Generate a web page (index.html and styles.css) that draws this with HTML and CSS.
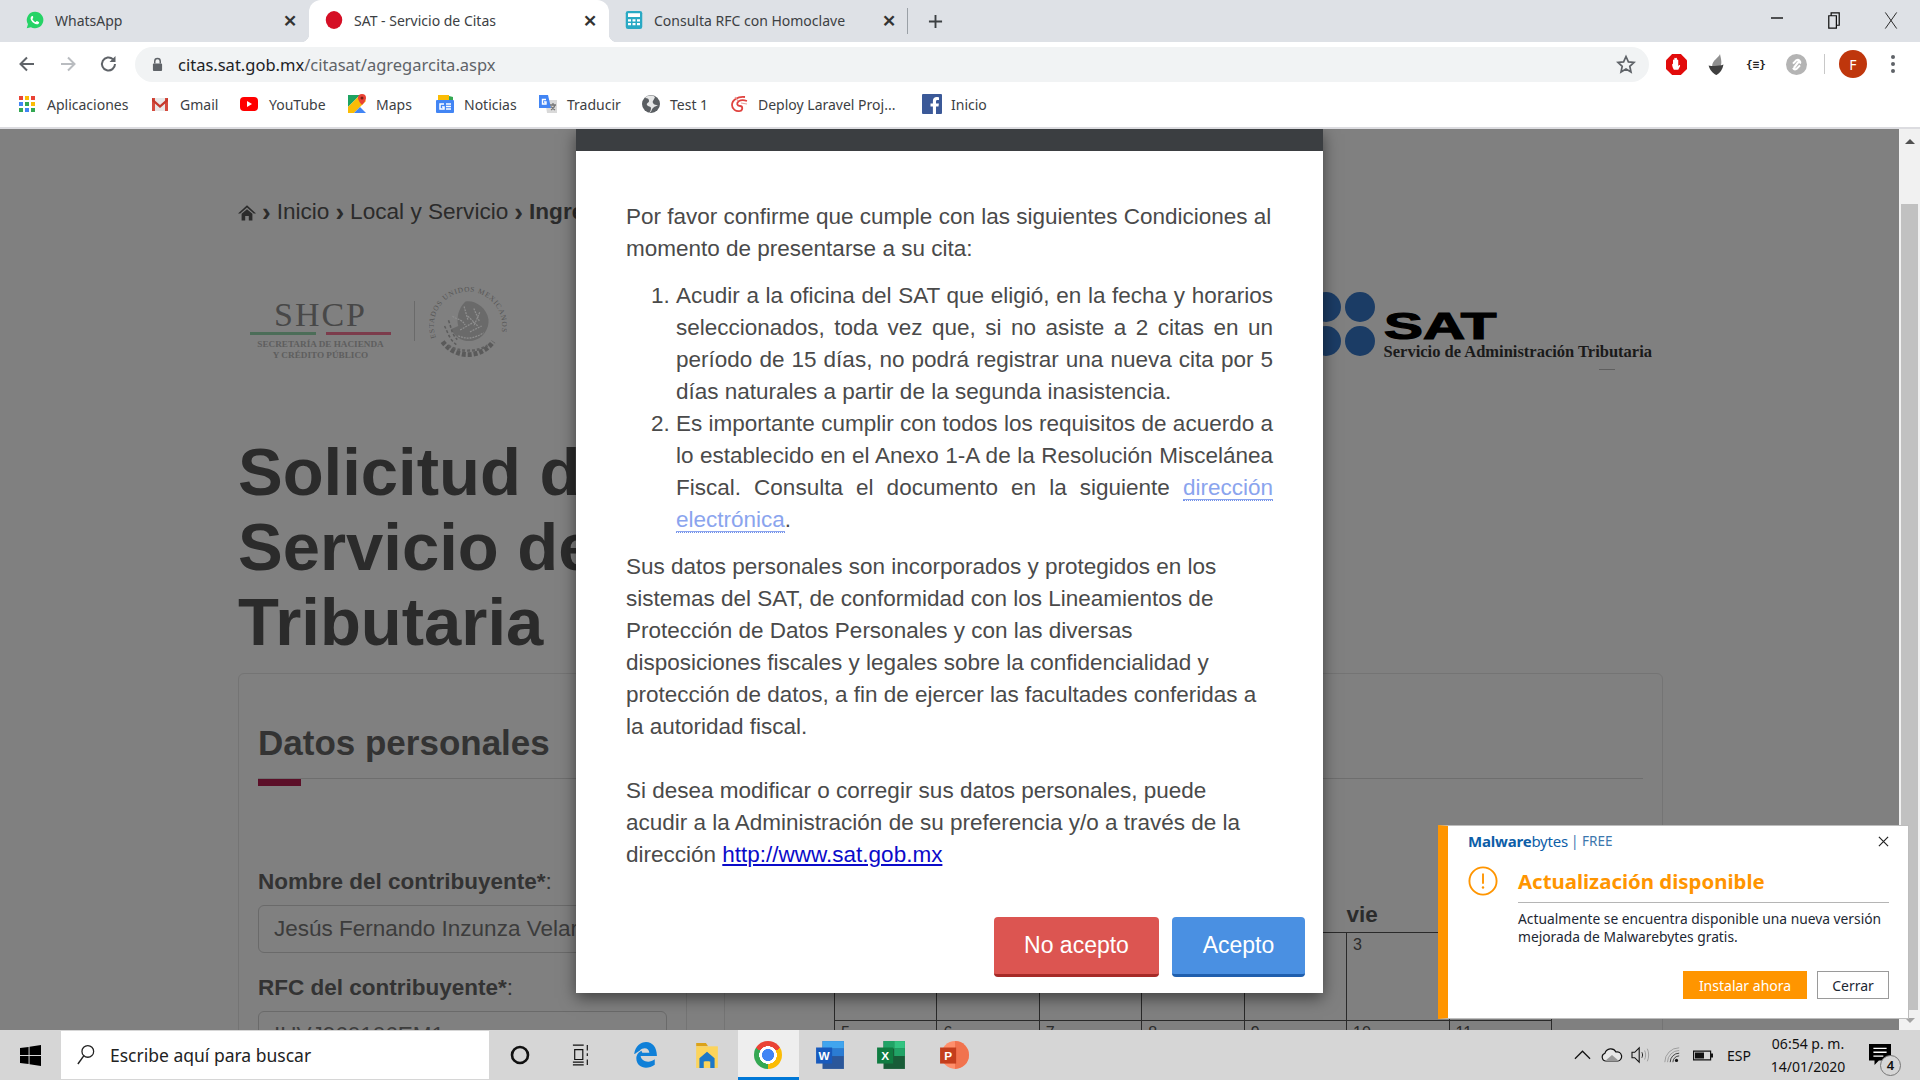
FILE: index.html
```html
<!DOCTYPE html>
<html lang="es">
<head>
<meta charset="utf-8">
<title>SAT - Servicio de Citas</title>
<link rel="stylesheet" href="styles.css">
</head>
<body>
<div class="screen">
  <div class="tabstrip">
    <div class="tab">
      <svg class="fav" viewBox="0 0 24 24"><path fill="#25d366" d="M12 1a11 11 0 0 0-9.400 16.600L1 23l5.600-1.500A11 11 0 1 0 12 1z"/><path fill="#fff" d="M8.400 6.500c-.4 0-1 .2-1.400.8-.5.7-1 1.500-.8 3 .3 2 2 4.300 4 5.800 1.800 1.300 3.600 1.900 5 1.600 1.200-.3 2-1.300 2.200-2.200.1-.5 0-.8-.3-1l-2.400-1.200c-.3-.1-.6-.1-.8.200l-.9 1.100c-.2.200-.4.200-.7.100-1.700-.7-3-2-3.800-3.600-.1-.3 0-.5.200-.7l.7-.9c.2-.2.200-.5.100-.8L9.400 7c-.2-.4-.6-.5-1-.5z"/></svg>
      <span class="tab-title">WhatsApp</span><span class="tab-x">×</span>
    </div>
    <div class="tab tab-active">
      <svg class="fav" viewBox="0 0 24 24"><ellipse cx="12" cy="12" rx="11" ry="12" fill="#d50f25"/></svg>
      <span class="tab-title">SAT - Servicio de Citas</span><span class="tab-x">×</span>
    </div>
    <div class="tab">
      <svg class="fav" viewBox="0 0 24 24"><rect x="1" y="0" width="22" height="24" rx="3" fill="#29a9c4"/><rect x="4" y="3" width="16" height="5" fill="#fff"/><path fill="#fff" d="M4 11h4v3H4zM10 11h4v3h-4zM16 11h4v3h-4zM4 16h4v3H4zM10 16h4v3h-4zM16 16h4v3h-4z"/></svg>
      <span class="tab-title">Consulta RFC con Homoclave</span><span class="tab-x">×</span>
    </div>
    <span class="tab-sep"></span>
    <span class="tab-plus">
      <svg viewBox="0 0 16 16" class="plus-ic"><path d="M8 1v14M1 8h14" stroke="#3c4043" stroke-width="2" fill="none"/></svg>
    </span>
    <div class="winctl">
      <svg viewBox="0 0 14 14" class="winbtn winbtn-m"><path d="M1 7h12" stroke="#111" stroke-width="1.400"/></svg>
      <svg viewBox="0 0 14 20" class="winbtn winbtn-r"><path d="M1.500 5h8v13h-8zM4 5V2h8.500v13H9.500" stroke="#111" stroke-width="1.300" fill="none"/></svg>
      <svg viewBox="0 0 14 20" class="winbtn winbtn-x"><path d="M1 1.500l12 17M13 1.500l-12 17" stroke="#222" stroke-width="1"/></svg>
    </div>
  </div>

  <div class="toolbar">
    <span class="navbtn"><svg viewBox="0 0 20 20"><path d="M17 10H4M10 3.500L3.500 10l6.500 6.500" fill="none" stroke="#5f6368" stroke-width="2"/></svg></span>
    <span class="navbtn"><svg viewBox="0 0 20 20"><path d="M3 10h13M10 3.500l6.500 6.500-6.500 6.500" fill="none" stroke="#b9bcc0" stroke-width="2"/></svg></span>
    <span class="navbtn"><svg viewBox="0 0 20 20"><path d="M16 10a6.500 6.500 0 1 1-2-4.700" fill="none" stroke="#5f6368" stroke-width="2"/><path d="M16.500 2v6h-6z" fill="#5f6368"/></svg></span>
    <div class="omnibox">
      <svg class="lock" viewBox="0 0 12 16"><path d="M3 7V4.500a3 3 0 0 1 6 0V7" fill="none" stroke="#5f6368" stroke-width="1.600"/><rect x="1" y="7" width="10" height="8" rx="1" fill="#5f6368"/></svg>
      <span class="url"><span class="url-host">citas.sat.gob.mx</span>/citasat/agregarcita.aspx</span>
      <svg class="star" viewBox="0 0 20 20"><path d="M10 2l2.400 5.400 5.600.6-4.200 3.800 1.200 5.700L10 14.600l-5 2.900 1.200-5.700L2 8l5.600-.6z" fill="none" stroke="#5f6368" stroke-width="1.700"/></svg>
    </div>
    <span class="extbtn"><svg viewBox="0 0 24 24" class="ext"><path d="M7 0h10l7 7v10l-7 7H7l-7-7V7z" fill="#e20b0b"/><path d="M9 18c-1-2-2-4-2-6 0-1 1-1 1 0V7c0-1 1.500-1 1.500 0V5c0-1 1.500-1 1.500 0v0c0-1 1.500-1 1.500 0v2c0-1 1.500-1 1.500 0v7c1-2 2.500-2 2 0l-2 4z" fill="#fff"/></svg></span>
    <span class="extbtn"><svg viewBox="0 0 24 24" class="ext"><path d="M16 0c-1 4-9 7-9 14 0 2 1 3 2 4l7-3c3-4 1-10 0-15z" fill="#8f8f8f"/><path d="M3 13c4 1 12 1 17-1-1 6-4 10-8 12-4-2-8-6-9-11z" fill="#3f3f3f"/></svg></span>
    <span class="extbtn ext-json">{≡}</span>
    <span class="extbtn"><svg viewBox="0 0 24 24" class="ext"><circle cx="12" cy="12" r="12" fill="#b4b4b4"/><path d="M9 16l6-8M8 11l4-4a3 3 0 0 1 4 4" stroke="#fff" stroke-width="2.400" fill="none"/><path d="M16 13l-4 4a3 3 0 0 1-4-1" stroke="#fff" stroke-width="2.400" fill="none"/></svg></span>
    <span class="tool-sep"></span>
    <span class="avatar">F</span>
    <span class="dots"><i></i><i></i><i></i></span>
  </div>

  <div class="bookmarks">
    <div class="bm"><svg class="bm-ic" viewBox="0 0 18 18"><path fill="#ea4335" d="M1 1h4v4H1z"/><path fill="#fbbc05" d="M7 1h4v4H7z"/><path fill="#ea4335" d="M13 1h4v4h-4z"/><path fill="#4285f4" d="M1 7h4v4H1z"/><path fill="#34a853" d="M7 7h4v4H7z"/><path fill="#fbbc05" d="M13 7h4v4h-4z"/><path fill="#34a853" d="M1 13h4v4H1z"/><path fill="#4285f4" d="M7 13h4v4H7z"/><path fill="#34a853" d="M13 13h4v4h-4z"/></svg>Aplicaciones</div>
    <div class="bm"><svg class="bm-ic" viewBox="0 0 18 18"><path fill="#e8e8e8" d="M1 3h16v13H1z"/><path fill="#d54c3f" d="M1 3h3v13H1zM14 3h3v13h-3z"/><path fill="#c5392c" d="M1 3l8 7 8-7v3l-8 7-8-7z"/></svg>Gmail</div>
    <div class="bm"><svg class="bm-ic" viewBox="0 0 18 18"><rect y="2" width="18" height="14" rx="4" fill="#f00"/><path d="M7 6l5 3-5 3z" fill="#fff"/></svg>YouTube</div>
    <div class="bm bm-l"><svg class="bm-ic" viewBox="0 0 20 20"><path fill="#1ea362" d="M1 1h12L1 13z"/><path fill="#fbbc05" d="M1 13L13 1l6 6L7 19H1z"/><path fill="#4285f4" d="M7 19l6-6 6 6z"/><path fill="#ea4335" d="M15 0a4 4 0 0 1 4 4c0 3-4 7-4 7s-4-4-4-7a4 4 0 0 1 4-4z"/><circle cx="15" cy="4" r="1.500" fill="#7b1d14"/></svg>Maps</div>
    <div class="bm bm-l"><svg class="bm-ic" viewBox="0 0 20 20"><path fill="#fbbc05" d="M3 1h11v6H3z"/><path fill="#34a853" d="M14 2l4 1v5h-4z"/><rect x="1" y="6" width="18" height="13" rx="1" fill="#4285f4"/><path stroke="#fff" stroke-width="1.500" fill="none" d="M9 10H5v5h4v-2H7M11 10h5M11 12.500h5M11 15h5"/></svg>Noticias</div>
    <div class="bm bm-l"><svg class="bm-ic" viewBox="0 0 20 20"><path fill="#d9d9d9" d="M7 6h12v13H9z"/><path fill="#4285f4" d="M1 1h9l3 13H1z"/><path stroke="#fff" stroke-width="1.400" fill="none" d="M8 5.500H4.500v4.500H8V8H6"/><path stroke="#777" stroke-width="1.300" fill="none" d="M12 11h6M15 9v2M17 11c-.5 2-2 4-4 5M13 12.500c1 1.500 2 2.500 4 3.500"/></svg>Traducir</div>
    <div class="bm bm-l"><svg class="bm-ic" viewBox="0 0 20 20"><circle cx="10" cy="10" r="9" fill="#5a5e62"/><path fill="#fff" d="M4 4c3 0 4 1 4 3S5 9 6 11s4 1 4 3-1 4-2 5c3-1 2-3 4-5s4-2 5-3c-2 0-4 0-5-2s1-3 2-6c-3-2-7-2-10 1z" opacity=".85"/></svg>Test 1</div>
    <div class="bm bm-l"><svg class="bm-ic" viewBox="0 0 20 20"><path fill="none" stroke="#e0433f" stroke-width="1.800" d="M16 3C9 2 3 6 3 11c0 4 4 7 8 6 3-1 3-5 0-5-3 0-4-3-1-5 2-1 5-1 8 0"/><path fill="none" stroke="#e9a09d" stroke-width="1.200" d="M6 3l3 4M12 9l6 1"/></svg>Deploy Laravel Proj...</div>
    <div class="bm bm-l"><svg class="bm-ic" viewBox="0 0 20 20"><rect x="0" y="0" width="20" height="20" rx="1" fill="#3b5998"/><path fill="#fff" d="M14 20v-7.500h2.500l.4-3H14V7.600c0-.9.300-1.500 1.500-1.500H17V3.300C16.700 3.300 15.800 3 14.700 3c-2.300 0-3.800 1.400-3.800 3.900v2.600H8.500v3h2.400V20z"/></svg>Inicio</div>
  </div>

  <main class="viewport">
    <div class="page">
      <nav class="crumbs">
        <svg class="home" viewBox="0 0 20 18"><path d="M10 1L0 10h2.500L10 3.500 17.500 10H20z" fill="#2b2b2b"/><path d="M4 10.500L10 5.500l6 5V18h-4v-5H8v5H4z" fill="#2b2b2b"/></svg>
        <b class="sep">›</b><span>Inicio</span><b class="sep">›</b><span>Local y Servicio</span><b class="sep">›</b><b>Ingreso al sistema</b>
      </nav>
      <div class="logos">
        <div class="shcp">
          <div class="shcp-text">
            <div class="shcp-name">SHCP</div>
            <div class="shcp-bars"><i class="bar-g"></i><i class="bar-r"></i></div>
            <div class="shcp-sub">SECRETARÍA DE HACIENDA</div>
            <div class="shcp-sub">Y CRÉDITO PÚBLICO</div>
          </div>
          <span class="shcp-div"></span>
          <svg class="seal" viewBox="0 0 80 80">
            <defs><path id="sealp" d="M9 56a35 35 0 1 1 62 0"/></defs>
            <text class="seal-text"><textPath href="#sealp" startOffset="3%">ESTADOS UNIDOS MEXICANOS</textPath></text>
            <path d="M14 56a32 32 0 0 0 52 0" fill="none" stroke="#5a5a5a" stroke-width="5" stroke-dasharray="4 2"/>
            <path d="M37 15c10-2 22 6 24 18 1 10-6 20-16 22-9 2-19-3-22-12l7-3c-2-8 0-18 7-25z" fill="#6a6a6a"/>
            <path d="M24 30c6 4 10 3 13 9M46 22l6 14M30 50c8 4 16 3 26-3M40 30l10 10M36 20l4 14M52 26l-6 14M32 44l14-8M42 46l12-6" stroke="#8e8e8e" stroke-width="1.300" fill="none" stroke-dasharray="2 1"/>
            <path d="M20 34c3 8 3 14 9 20M16 40c3 6 5 14 12 19" stroke="#5c5c5c" stroke-width="1.600" stroke-dasharray="3 2" fill="none"/>
            <path d="M20 60c10 7 30 7 40 0" stroke="#606060" stroke-width="2.500" stroke-dasharray="3 2" fill="none"/>
          </svg>
        </div>
        <div class="sat">
          <div class="sat-dots"><i></i><i></i><i></i><i></i></div>
          <div class="sat-text">
            <div class="sat-mark"><span>SAT</span></div>
            <div class="sat-name">Servicio de Administración Tributaria</div>
            <div class="sat-tiny"></div>
          </div>
        </div>
      </div>
      <h1 class="title">Solicitud de Cita de<br>Servicio de Administración<br>Tributaria</h1>
      <section class="panel">
        <h2 class="panel-title">Datos personales</h2>
        <div class="panel-body">
          <div class="form-col">
            <label class="lbl"><b>Nombre del contribuyente*</b>:</label>
            <div class="input">Jesús Fernando Inzunza Velarde</div>
            <label class="lbl"><b>RFC del contribuyente*</b>:</label>
            <div class="input">IUVJ960106EM1</div>
          </div>
          <div class="cal-col">
            <table class="cal">
              <thead><tr><th>dom</th><th>lun</th><th>mar</th><th>mié</th><th>jue</th><th>vie</th><th>sáb</th></tr></thead>
              <tbody>
                <tr><td></td><td></td><td></td><td>1</td><td>2</td><td>3</td><td>4</td></tr>
                <tr><td>5</td><td>6</td><td>7</td><td>8</td><td>9</td><td>10</td><td>11</td></tr>
              </tbody>
            </table>
          </div>
        </div>
      </section>
    </div>

    <div class="scrollbar">
      <span class="sb-arrow sb-up"></span>
      <span class="sb-thumb"></span>
      <span class="sb-arrow sb-down"></span>
    </div>

    <div class="modal">
      <div class="modal-strip"></div>
      <div class="modal-body">
        <p>Por favor confirme que cumple con las siguientes Condiciones al momento de presentarse a su cita:</p>
        <ol>
          <li>Acudir a la oficina del SAT que eligió, en la fecha y horarios seleccionados, toda vez que, si no asiste a 2 citas en un período de 15 días, no podrá registrar una nueva cita por 5 días naturales a partir de la segunda inasistencia.</li>
          <li>Es importante cumplir con todos los requisitos de acuerdo a lo establecido en el Anexo 1-A de la Resolución Miscelánea Fiscal. Consulta el documento en la siguiente <a class="link-soft" href="#">dirección electrónica</a>.</li>
        </ol>
        <p class="p-narrow">Sus datos personales son incorporados y protegidos en los sistemas del SAT, de conformidad con los Lineamientos de Protección de Datos Personales y con las diversas disposiciones fiscales y legales sobre la confidencialidad y protección de datos, a fin de ejercer las facultades conferidas a la autoridad fiscal.</p>
        <p class="p-narrow p-gap">Si desea modificar o corregir sus datos personales, puede acudir a la Administración de su preferencia y/o a través de la dirección <a class="link-hard" href="#">http://www.sat.gob.mx</a></p>
      </div>
      <div class="modal-foot">
        <button class="btn btn-no">No acepto</button>
        <button class="btn btn-yes">Acepto</button>
      </div>
    </div>

    <aside class="toast">
      <div class="toast-head">
        <span class="mb-logo"><b>Malware</b>bytes</span><span class="mb-free">| FREE</span>
        <svg class="toast-x" viewBox="0 0 12 12"><path d="M1 1l10 10M11 1L1 11" stroke="#222" stroke-width="1.300"/></svg>
      </div>
      <div class="toast-main">
        <svg class="toast-ic" viewBox="0 0 32 32"><circle cx="16" cy="16" r="14.500" fill="none" stroke="#ff9500" stroke-width="2"/><path d="M16 8v11" stroke="#ff9500" stroke-width="2"/><circle cx="16" cy="23" r="1.300" fill="#ff9500"/></svg>
        <div class="toast-col">
          <div class="toast-title">Actualización disponible</div>
          <div class="toast-msg">Actualmente se encuentra disponible una nueva versión mejorada de Malwarebytes gratis.</div>
          <div class="toast-btns">
            <span class="tbtn tbtn-main">Instalar ahora</span>
            <span class="tbtn tbtn-alt">Cerrar</span>
          </div>
        </div>
      </div>
    </aside>
  </main>

  <footer class="taskbar">
    <span class="tb-start"><svg viewBox="0 0 22 22" class="win"><path d="M0 3.200L9 2v8.500H0zM10 1.900L22 0v10.500H10zM0 11.500h9V20l-9-1.200zM10 11.500h12V22l-12-1.900z" fill="#000"/></svg></span>
    <div class="tb-search">
      <svg viewBox="0 0 20 24" class="tb-lens"><circle cx="12" cy="8" r="6.500" fill="none" stroke="#222" stroke-width="1.400"/><path d="M7.500 13L1 22" stroke="#222" stroke-width="1.600"/></svg>
      <span>Escribe aquí para buscar</span>
    </div>
    <span class="tb-cell"><svg viewBox="0 0 20 20" class="tb-ic-s"><circle cx="10" cy="10" r="8" fill="none" stroke="#111" stroke-width="2.600"/></svg></span>
    <span class="tb-cell"><svg viewBox="0 0 20 24" class="tb-ic-t"><path d="M1 1h12M1 23h12M3 6h9v11H3zM1 20h12M17 1v6M17 10v3M17 17v6" stroke="#111" stroke-width="1.300" fill="none"/></svg></span>
    <span class="tb-gap"></span>
    <span class="tb-app"><svg viewBox="0 0 24 24" class="tb-ic"><path fill="#1080d8" d="M2 11C3 4 8 0 13 0c6 0 10 5 10 13H8c.3 5 8 7 13 3v5c-7 5-17 3-17-6 0-3 2-6 5-7 0 2 0 2 7 2 0-4-5-6-9-2-2 1-4 3-5 3z"/></svg></span>
    <span class="tb-app"><svg viewBox="0 0 24 24" class="tb-ic"><path fill="#dba21a" d="M2 1h9l2 3H2z"/><path fill="#fcd45b" d="M2 4h20v20H2z"/><path fill="#1d78c9" d="M12 9l7 6v9h-4v-6H9v6H5v-9z"/><path fill="#fcd45b" d="M10 18h4v6h-4z"/></svg></span>
    <span class="tb-app tb-active"><span class="chrome"></span></span>
    <span class="tb-app"><svg viewBox="0 0 28 28" class="tb-ic tb-ic-o"><path fill="#2b579a" d="M7 1h20v26H7z"/><path fill="#41a5ee" d="M7 1h20v7H7z"/><path fill="#2b7cd3" d="M7 8h20v7H7z"/><path fill="#185abd" d="M1 7h15v15H1z"/><text x="8.500" y="19" class="ofc">W</text></svg></span>
    <span class="tb-app"><svg viewBox="0 0 28 28" class="tb-ic tb-ic-o"><path fill="#185c37" d="M7 1h20v26H7z"/><path fill="#33c481" d="M17 1h10v7H17z"/><path fill="#21a366" d="M7 1h10v7H7zM17 8h10v7H17z"/><path fill="#107c41" d="M1 7h15v15H1z"/><text x="8.500" y="19" class="ofc">X</text></svg></span>
    <span class="tb-app tb-app-p"><svg viewBox="0 0 28 28" class="tb-ic tb-ic-o"><circle cx="15" cy="14" r="13" fill="#ff8f6b"/><path fill="#ed6c47" d="M15 1a13 13 0 0 1 0 26z" opacity=".8"/><path fill="#c43e1c" d="M1 7h15v15H1z"/><text x="8.500" y="19" class="ofc">P</text></svg></span>
    <div class="tray">
      <span class="tr"><svg viewBox="0 0 18 10" class="tr-ic"><path d="M1 9l8-8 8 8" fill="none" stroke="#111" stroke-width="1.300"/></svg></span>
      <span class="tr"><svg viewBox="0 0 22 14" class="tr-cloud"><path d="M5 13a4 4 0 0 1-1-7.800A6 6 0 0 1 15 4a4.500 4.500 0 0 1 2 9z" fill="#e8e8e8" stroke="#111" stroke-width="1.200"/><path d="M4 13l7-6 7 6z" fill="#9a9a9a"/></svg></span>
      <span class="tr"><svg viewBox="0 0 22 20" class="tr-spk"><path d="M1 7h3l5-5v16l-5-5H1z" fill="none" stroke="#111" stroke-width="1.200"/><path d="M12 7c1 2 1 4 0 6" fill="none" stroke="#111"/><path d="M15 5c1.500 3 1.500 7 0 10M18 3c2 4 2 10 0 14" fill="none" stroke="#999"/></svg></span>
      <span class="tr"><svg viewBox="0 0 20 20" class="tr-spk"><path d="M2 18A16 16 0 0 1 18 2M5 18A13 13 0 0 1 18 5" fill="none" stroke="#999"/><path d="M8 18a10 10 0 0 1 10-10M11 18a7 7 0 0 1 7-7" fill="none" stroke="#333"/><circle cx="15" cy="16" r="1.800" fill="#111"/></svg></span>
      <span class="tr"><svg viewBox="0 0 20 10" class="tr-bat"><path d="M.6.6h17v8.800H.6z" fill="none" stroke="#111" stroke-width="1.200"/><path d="M2 2h9v6H2zM18 3h2v4h-2z" fill="#111"/></svg></span>
      <span class="tr tr-lang">ESP</span>
      <span class="tr tr-clock"><span>06:54 p. m.</span><span>14/01/2020</span></span>
      <span class="tr tr-notif">
        <svg viewBox="0 0 20 20" class="nt"><path d="M0 0h20v15H9l-4 4v-4H0z" fill="#000"/><path d="M4 4h12M4 7.500h12M4 11h9" stroke="#fff" stroke-width="1.200"/></svg>
        <span class="badge">4</span>
      </span>
    </div>
  </footer>
</div>
</body>
</html>
```
FILE: styles.css
```css
* { box-sizing: border-box; }
html, body { margin: 0; padding: 0; height: 100%; overflow: hidden; }
body { font-family: "Liberation Sans", Arial, sans-serif; color: #333; }
.screen { width: 1920px; height: 1080px; display: flex; flex-direction: column; overflow: hidden; }

/* tab strip */
.tabstrip { height: 42px; flex: none; background: #dee1e6; display: flex; align-items: stretch; padding-left: 10px; font-family: "Noto Sans", sans-serif; font-size: 14px; color: #3c4043; }
.tab { width: 299px; display: flex; align-items: center; padding: 0 10px 2px 16px; gap: 11px; }
.tab-active { width: 300px; background: #fff; border-radius: 12px 12px 0 0; position: relative; }
.tab-active::before, .tab-active::after { content: ""; position: absolute; bottom: 0; width: 8px; height: 8px; }
.tab-active::before { left: -8px; background: radial-gradient(circle at 0 0, transparent 8px, #fff 8.500px); }
.tab-active::after { right: -8px; background: radial-gradient(circle at 100% 0, transparent 8px, #fff 8.500px); }
.fav { width: 18px; height: 20px; flex: none; }
.tab-title { flex: 1; white-space: nowrap; overflow: hidden; }
.tab-x { width: 18px; text-align: center; font-size: 24px; line-height: 20px; font-weight: 600; color: #333; flex: none; }
.tab-sep { width: 1px; height: 26px; background: #9aa0a6; align-self: center; margin-left: -1px; }
.tab-plus { width: 54px; display: flex; align-items: center; justify-content: center; }
.plus-ic { width: 15px; height: 15px; }
.winctl { margin-left: auto; display: flex; align-items: flex-start; padding-top: 11px; }
.winbtn { width: 14px; height: 14px; }
.winbtn-m { margin-right: 43px; }
.winbtn-r { height: 19px; margin-right: 43px; }
.winbtn-x { height: 19px; margin-right: 22px; }

/* toolbar */
.toolbar { height: 44px; flex: none; background: #fff; display: flex; align-items: center; padding-left: 6px; }
.navbtn { width: 41px; display: flex; justify-content: center; }
.navbtn svg { width: 20px; height: 20px; }
.omnibox { width: 1514px; height: 35px; margin-left: 6px; border-radius: 18px; background: #f1f3f4; display: flex; align-items: center; padding: 0 13px 0 17px; }
.lock { width: 11px; height: 15px; flex: none; }
.url { margin-left: 15px; font-family: "Noto Sans", sans-serif; font-size: 16.500px; color: #5f6368; white-space: nowrap; }
.url-host { color: #202124; }
.star { width: 20px; height: 21px; margin-left: auto; }
.extbtn { width: 40px; display: flex; justify-content: center; }
.ext { width: 21px; height: 23px; }
.ext-json { font-family: "DejaVu Sans Mono", monospace; font-size: 11px; color: #222; font-weight: bold; }
.omnibox + .extbtn { margin-left: 7px; }
.tool-sep { width: 1px; height: 20px; background: #c8c8c8; margin-left: 8px; }
.avatar { width: 28px; height: 28px; border-radius: 50%; background: #bf360c; color: #fff; font-family: "Noto Sans", sans-serif; font-size: 14px; display: flex; align-items: center; justify-content: center; margin-left: 14px; }
.dots { display: flex; flex-direction: column; gap: 3px; margin-left: 24px; }
.dots i { width: 4px; height: 4px; border-radius: 50%; background: #5f6368; display: block; }

/* bookmarks */
.bookmarks { height: 43px; flex: none; background: #fff; border-bottom: 2px solid #dcdce0; display: grid; grid-template-columns: 133px 89px 107px 88px 103px 103px 88px 193px auto; justify-content: start; align-items: center; padding: 0 0 5px 18px; font-family: "Noto Sans", sans-serif; font-size: 14px; color: #3c4043; }
.bm { display: flex; align-items: center; gap: 11px; white-space: nowrap; }
.bm-l { gap: 9px; }
.bm-ic { width: 18px; height: 18px; flex: none; }
.bm-l .bm-ic { width: 20px; height: 20px; }

/* viewport and dimmed page */
.viewport { flex: 1; position: relative; overflow: hidden; background: #808080; }
.page { width: 1899px; height: 901px; overflow: hidden; padding: 69px 0 0 238px; color: #2b2b2b; }
.crumbs { display: flex; align-items: center; height: 28px; font-size: 22.600px; gap: 6px; white-space: nowrap; }
.crumbs .sep { font-size: 26px; line-height: 26px; }
.home { width: 18px; height: 17px; }
.logos { display: flex; justify-content: space-between; width: 1414px; height: 80px; margin-top: 64px; }
.shcp { display: flex; align-items: flex-start; padding-left: 12px; color: #4c4c4c; }
.shcp-text { width: 141px; text-align: center; font-family: "Liberation Serif", serif; padding-top: 9px; }
.shcp-name { font-size: 34px; line-height: 32px; letter-spacing: 2px; color: #484848; }
.shcp-bars { display: flex; gap: 10px; margin-top: 1px; }
.shcp-bars i { display: block; height: 3px; flex: 1; }
.bar-g { background: #4c6d58; }
.bar-r { background: #7c3c4c; }
.shcp-sub { font-size: 9.200px; font-weight: bold; line-height: 11px; color: #5e5e5e; white-space: nowrap; }
.shcp-bars + .shcp-sub { margin-top: 4px; }
.shcp-div { width: 1px; height: 40px; background: #6a6a6a; margin: 11px 14px 0 23px; }
.seal { width: 78px; height: 78px; margin-top: -3px; }
.seal-text { font-family: "Liberation Serif", serif; font-size: 7.500px; fill: #555; letter-spacing: .8px; }
.sat { display: flex; align-items: flex-start; gap: 9px; margin-top: 2px; }
.sat-dots { display: grid; grid-template-columns: 30px 30px; gap: 4px; }
.sat-dots i { display: block; width: 30px; height: 30px; border-radius: 50%; background: #1b3c65; }
.sat-text { padding-top: 22px; }
.sat-mark { height: 26px; width: 113px; }
.sat-mark span { display: block; font-weight: bold; font-size: 36px; line-height: 26px; color: #000; -webkit-text-stroke: 1.200px #000; transform: scaleX(1.620); transform-origin: left center; }
.sat-name { font-family: "Liberation Serif", serif; font-weight: bold; font-size: 16.500px; line-height: 18px; color: #1a1a1a; margin-top: 3px; white-space: nowrap; }
.sat-tiny { width: 16px; height: 1px; margin: 8px 0 0 215px; background: #5f5f5f; }
.title { margin: 64px 0 0; font-size: 67px; line-height: 75px; font-weight: bold; color: #2b2b2b; white-space: nowrap; }
.panel { margin-top: 14px; width: 1425px; height: 600px; border: 1px solid #747474; border-radius: 6px; padding: 49px 19px 0; }
.panel-title { margin: 0; font-size: 35px; line-height: 40px; font-weight: bold; color: #333; padding-bottom: 15px; border-bottom: 1px solid #6e6e6e; position: relative; }
.panel-title::after { content: ""; position: absolute; left: 0; top: 56px; width: 43px; height: 7px; background: #5b0f28; }
.panel-body { display: flex; }
.form-col { width: 429px; border-right: 1px solid #747474; padding: 90px 19px 0 0; }
.lbl { display: block; font-size: 22.500px; line-height: 26px; color: #333; white-space: nowrap; }
.input { height: 48px; margin: 10px 0 22px; border: 1px solid #6a6a6a; border-radius: 6px; padding: 0 15px; font-size: 22.500px; line-height: 46px; color: #3c3c3c; white-space: nowrap; overflow: hidden; }
.cal-col { margin-left: 37px; border-left: 1px solid #747474; padding: 119px 0 0 109px; height: 300px; }
.cal { border-collapse: collapse; table-layout: fixed; width: 718px; color: #2b2b2b; }
.cal th { height: 34px; text-align: left; font-size: 22.500px; font-weight: bold; padding: 0; vertical-align: middle; }
.cal td { height: 88px; border: 1px solid #2a2a2a; vertical-align: top; font-size: 16px; padding: 3px 6px; }

/* scrollbar */
.scrollbar { position: absolute; top: 0; right: 0; bottom: 0; width: 21px; background: #f1f1f1; display: flex; flex-direction: column; align-items: center; }
.sb-arrow { width: 0; height: 0; border-left: 5px solid transparent; border-right: 5px solid transparent; }
.sb-up { border-bottom: 5px solid #505050; margin-top: 10px; }
.sb-thumb { width: 17px; height: 806px; background: #c1c1c1; margin-top: 60px; }
.sb-down { border-top: 5px solid #a3a3a3; margin-top: 8px; }

/* modal */
.modal { position: absolute; left: 576px; top: 0; width: 747px; height: 864px; background: #fff; box-shadow: 0 5px 15px rgba(0,0,0,.5); }
.modal-strip { height: 22px; background: #3b3e41; }
.modal-body { padding: 50px 50px 0; font-size: 22.500px; line-height: 32px; color: #4a4a4a; height: 766px; }
.modal-body p { margin: 0 0 15px; }
.modal-body .p-narrow { max-width: 632px; }
.modal-body .p-gap { margin-top: 32px; margin-bottom: 0; }
.modal-body ol { margin: 15px 0 15px; padding-left: 50px; text-align: justify; }
.link-soft { color: #8aa4ee; text-decoration: none; border-bottom: 1px dotted #6f8ee8; box-shadow: inset 0 -1px 0 #8aa4ee; }
.link-hard { color: #0b0bc9; text-decoration: underline; }
.modal-foot { display: flex; justify-content: flex-end; gap: 13px; padding-right: 18px; }
.btn { height: 60px; border: 0; border-radius: 4px; color: #fff; font-family: "Liberation Sans", sans-serif; font-size: 23px; padding: 0; }
.btn-no { width: 165px; background: #dc5551; border-bottom: 3px solid #a62a27; }
.btn-yes { width: 133px; background: #4a90e2; border-bottom: 3px solid #1f5fae; }

/* toast */
.toast { position: absolute; right: 11px; bottom: 11px; width: 471px; height: 194px; background: #fff; border: 1px solid #bdbdbd; border-left: 10px solid #ff9500; font-family: "Noto Sans", sans-serif; color: #1c2733; }
.toast-head { display: flex; align-items: center; height: 30px; padding: 0 19px 0 20px; }
.mb-logo { font-size: 15px; color: #0d5ea8; letter-spacing: -.2px; }
.mb-free { font-size: 13.500px; color: #3c77ad; margin-left: 3px; }
.toast-x { width: 11px; height: 11px; margin-left: auto; }
.toast-main { display: flex; padding: 11px 19px 0 20px; gap: 20px; }
.toast-ic { width: 30px; height: 30px; flex: none; margin-top: -1px; }
.toast-col { flex: 1; }
.toast-title { font-size: 20.400px; line-height: 28px; font-weight: 700; color: #ff9500; padding-bottom: 7px; border-bottom: 1px solid #b5b5b5; white-space: nowrap; }
.toast-msg { font-size: 13.800px; line-height: 18px; margin-top: 7px; }
.toast-btns { display: flex; justify-content: flex-end; gap: 10px; margin-top: 25px; }
.tbtn { height: 28px; display: flex; align-items: center; justify-content: center; font-size: 14px; }
.tbtn-main { width: 124px; background: #ff9500; color: #fff; }
.tbtn-alt { width: 72px; border: 1px solid #9a9a9a; }

/* taskbar */
.taskbar { height: 50px; flex: none; background: #d6d6d6; display: flex; align-items: center; font-family: "Noto Sans", sans-serif; color: #111; }
.tb-start { width: 61px; display: flex; justify-content: center; }
.win { width: 21px; height: 21px; }
.tb-search { width: 428px; height: 48px; background: #fff; display: flex; align-items: center; padding-left: 16px; gap: 15px; font-size: 17.500px; color: #222; }
.tb-lens { width: 18px; height: 22px; }
.tb-cell { width: 61px; display: flex; justify-content: center; }
.tb-ic-s { width: 20px; height: 20px; }
.tb-ic-t { width: 18px; height: 24px; }
.tb-gap { width: 3.500px; }
.tb-app { width: 61.500px; height: 50px; display: flex; align-items: center; justify-content: center; }
.tb-app-p { padding-left: 2px; }
.tb-ic { width: 26px; height: 26px; }
.tb-ic-o { width: 30px; height: 30px; }
.tb-active { background: #eeeeee; border-bottom: 3px solid #0078d7; padding-top: 3px; }
.chrome { width: 28px; height: 28px; border-radius: 50%; background: radial-gradient(circle, #4285f4 0 30%, #fff 31% 44%, transparent 45%), conic-gradient(#ea4335 0 60deg, #fbbc05 60deg 180deg, #34a853 180deg 300deg, #ea4335 300deg); }
.ofc { font-family: "Liberation Sans", sans-serif; font-size: 11px; font-weight: bold; fill: #fff; text-anchor: middle; }
.tray { margin-left: auto; height: 50px; display: grid; grid-template-columns: 30px 29px 30px 32px 30px 42px 96px 64px; align-items: center; }
.tr { display: flex; align-items: center; justify-content: center; }
.tr-ic { width: 17px; height: 10px; }
.tr-cloud { width: 22px; height: 14px; }
.tr-spk { width: 20px; height: 18px; }
.tr-bat { width: 20px; height: 11px; }
.tr-lang { font-size: 14px; }
.tr-clock { flex-direction: column; font-size: 14px; line-height: 23px; }
.tr-notif { position: relative; justify-content: flex-start; padding-left: 13px; }
.nt { width: 22px; height: 22px; }
.badge { position: absolute; left: 24px; top: 11px; width: 21px; height: 21px; border: 1px solid #777; border-radius: 50%; background: #d6d6d6; font-size: 13px; line-height: 19px; text-align: center; font-weight: 600; }
```
